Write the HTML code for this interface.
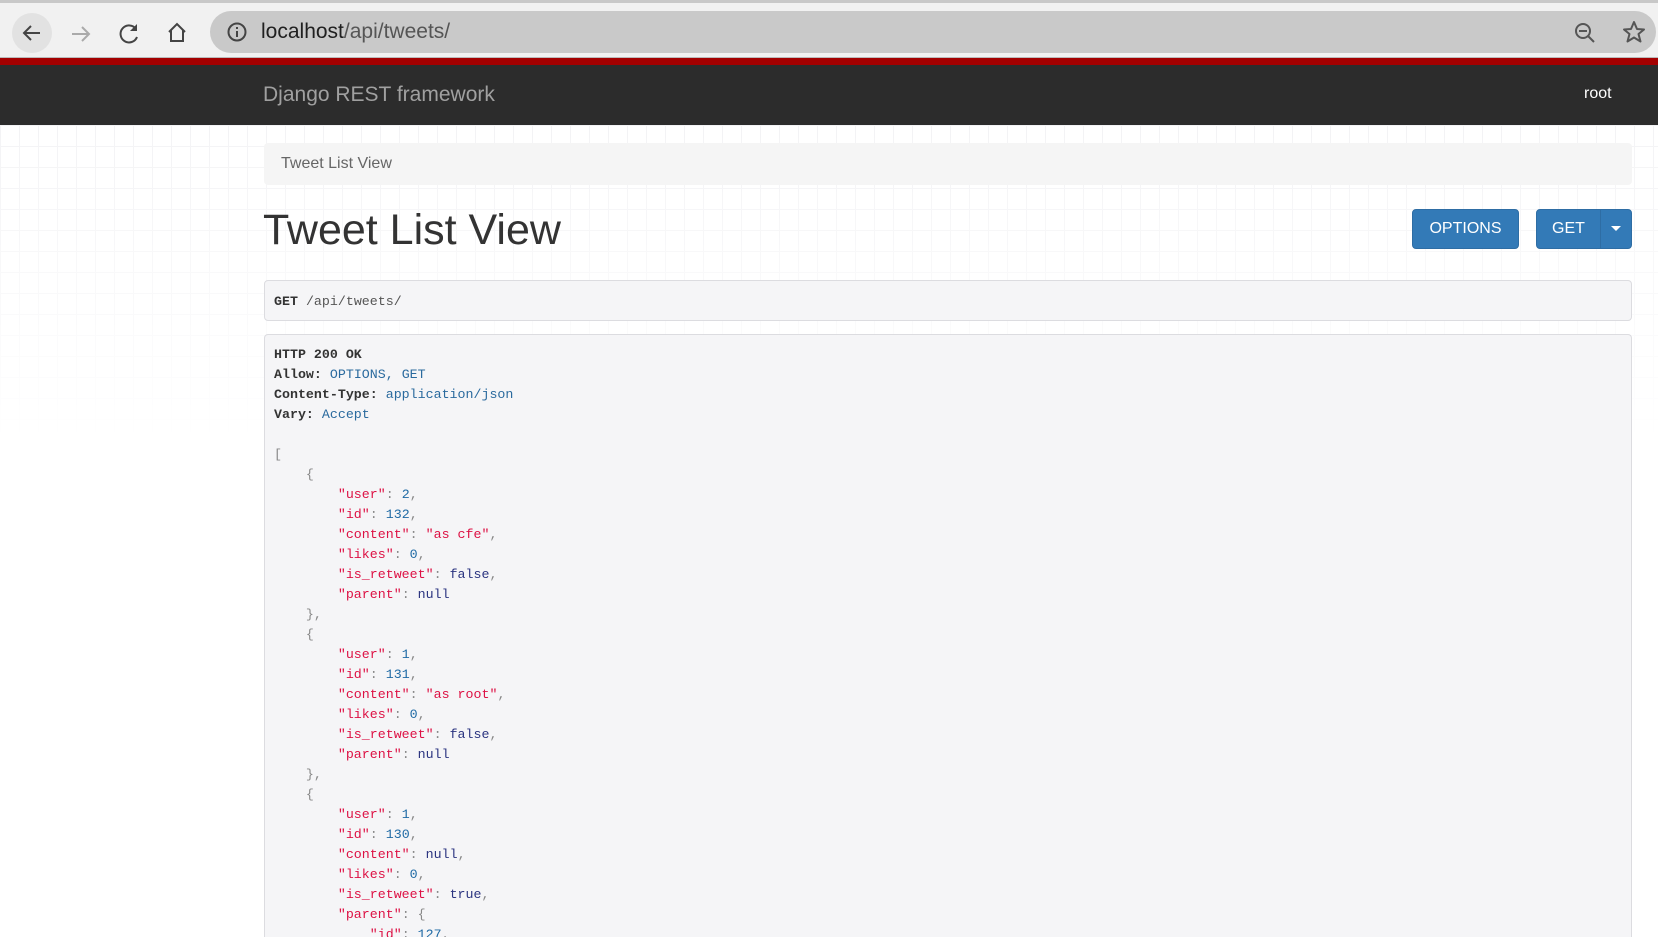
<!DOCTYPE html>
<html style="width:1658px;height:937px;overflow:hidden"><head><meta charset="utf-8"><style>
*{margin:0;padding:0;box-sizing:border-box}
body{width:1658px;height:937px;overflow:hidden;background:#fff;font-family:"Liberation Sans",sans-serif;position:relative}
.chrome{position:absolute;left:0;top:0;width:1658px;height:58px;background:#f1f1f1;border-top:3px solid #c8c8c8;border-bottom:1px solid #bbb}
.url{position:absolute;left:210px;top:8px;width:1446px;height:42px;background:#c9c9c9;border-radius:21px}
.url span{position:absolute;left:51px;top:9px;font-size:21px;color:#202020;font-family:"Liberation Sans",sans-serif}
.url span i{font-style:normal;color:#555}
.red{position:absolute;left:0;top:58px;width:1658px;height:7px;background:#a30000}
.nav{position:absolute;left:0;top:65px;width:1658px;height:60px;background:#2c2c2c}
.brand{position:absolute;left:263px;top:18px;font-size:21px;color:#a0a0a0}
.root{position:absolute;left:1584px;top:20px;font-size:16px;color:#fff}
.grid{position:absolute;left:0;top:125px;width:1658px;height:320px;
background-image:linear-gradient(#f3f3f5 1px,transparent 1px),linear-gradient(90deg,#f3f3f5 1px,transparent 1px);background-size:19px 21px;
-webkit-mask-image:linear-gradient(#000,transparent);}
.bc{position:absolute;left:264px;top:143px;width:1368px;height:42px;background:#f5f5f5;border-radius:4px;font-size:16px;color:#666;padding:12px 17px}
h1{position:absolute;left:263px;top:206px;font-size:43px;font-weight:normal;color:#333}
.btn{position:absolute;top:209px;height:40px;background:#337ab7;border:1px solid #2e6da4;border-radius:4px;color:#fff;font-size:16px;line-height:38px;text-align:center}
.box{position:absolute;left:264px;width:1368px;background:#f5f5f7;border:1px solid #dcdce0;border-radius:4px;font-family:"Liberation Mono",monospace;font-size:13.3px;color:#333}
pre{font-family:"Liberation Mono",monospace;font-size:13.3px;line-height:20px;color:#333;position:absolute;left:9px;top:10px}
.b{color:#333;font-weight:bold}.v{color:#2a6a9e}.k{color:#dd1144}.n{color:#1f6aa5}.l{color:#2b3480}.p{color:#888}
</style></head><body>
<div class="chrome">
<svg style="position:absolute;left:12px;top:10px" width="40" height="40"><circle cx="20" cy="20" r="20" fill="#e2e2e2"/><path d="M28 20H12M19 13l-7 7 7 7" stroke="#444" stroke-width="2" fill="none"/></svg>
<svg style="position:absolute;left:68px;top:18px" width="26" height="26"><path d="M4 13h17M14 6l7 7-7 7" stroke="#aaa" stroke-width="2" fill="none"/></svg>
<svg style="position:absolute;left:116px;top:18px" width="26" height="26"><path d="M20 8A8.5 8.5 0 1 0 21 16" stroke="#444" stroke-width="2" fill="none"/><path d="M21 3v7h-7" fill="#444"/></svg>
<svg style="position:absolute;left:164px;top:17px" width="26" height="26"><path d="M5 12L13 4l8 8M7 10v11h12V10" stroke="#444" stroke-width="2" fill="none"/></svg>
<div class="url"><svg style="position:absolute;left:16px;top:10px" width="22" height="22"><circle cx="11" cy="11" r="8.5" stroke="#444" stroke-width="2" fill="none"/><path d="M11 10v6M11 6v2" stroke="#444" stroke-width="2"/></svg><span>localhost<i>/api/tweets/</i></span>
<svg style="position:absolute;left:1363px;top:10px" width="24" height="24"><circle cx="10" cy="10" r="7" stroke="#555" stroke-width="2" fill="none"/><path d="M6 10h8M15 15l6 6" stroke="#555" stroke-width="2"/></svg>
<svg style="position:absolute;left:1412px;top:9px" width="24" height="24"><path d="M12 2l3 7 7 .5-5.5 4.5 2 7.5L12 17.5 5.5 21.5l2-7.5L2 9.5 9 9z" stroke="#555" stroke-width="2" fill="none" stroke-linejoin="round"/></svg>
</div>
</div>
<div class="red"></div>
<div class="nav"><div class="brand">Django REST framework</div><div class="root">root</div></div>
<div class="grid"></div>
<div class="bc">Tweet List View</div>
<h1>Tweet List View</h1>
<div class="btn" style="left:1412px;width:107px">OPTIONS</div>
<div class="btn" style="left:1536px;width:96px;text-align:left;padding-left:15px">GET<span style="position:absolute;left:63px;top:-1px;width:1px;height:40px;background:#2e6da4"></span><svg style="position:absolute;left:74px;top:16px" width="10" height="6"><path d="M0 0h10L5 5z" fill="#fff"/></svg></div>
<div class="box" style="top:280px;height:41px"><pre style="top:11px"><span class="b">GET</span> <span style="color:#555">/api/tweets/</span></pre></div>
<div class="box" style="top:334px;height:603px;border-bottom:none;border-radius:4px 4px 0 0;overflow:hidden"><pre><span class="b">HTTP 200 OK</span>
<span class="b">Allow:</span> <span class="v">OPTIONS, GET</span>
<span class="b">Content-Type:</span> <span class="v">application/json</span>
<span class="b">Vary:</span> <span class="v">Accept</span>

<span class="p">[</span>
    <span class="p">{</span>
        <span class="k">"user"</span><span class="p">: </span><span class="n">2</span><span class="p">,</span>
        <span class="k">"id"</span><span class="p">: </span><span class="n">132</span><span class="p">,</span>
        <span class="k">"content"</span><span class="p">: </span><span class="k">"as cfe"</span><span class="p">,</span>
        <span class="k">"likes"</span><span class="p">: </span><span class="n">0</span><span class="p">,</span>
        <span class="k">"is_retweet"</span><span class="p">: </span><span class="l">false</span><span class="p">,</span>
        <span class="k">"parent"</span><span class="p">: </span><span class="l">null</span>
    <span class="p">},</span>
    <span class="p">{</span>
        <span class="k">"user"</span><span class="p">: </span><span class="n">1</span><span class="p">,</span>
        <span class="k">"id"</span><span class="p">: </span><span class="n">131</span><span class="p">,</span>
        <span class="k">"content"</span><span class="p">: </span><span class="k">"as root"</span><span class="p">,</span>
        <span class="k">"likes"</span><span class="p">: </span><span class="n">0</span><span class="p">,</span>
        <span class="k">"is_retweet"</span><span class="p">: </span><span class="l">false</span><span class="p">,</span>
        <span class="k">"parent"</span><span class="p">: </span><span class="l">null</span>
    <span class="p">},</span>
    <span class="p">{</span>
        <span class="k">"user"</span><span class="p">: </span><span class="n">1</span><span class="p">,</span>
        <span class="k">"id"</span><span class="p">: </span><span class="n">130</span><span class="p">,</span>
        <span class="k">"content"</span><span class="p">: </span><span class="l">null</span><span class="p">,</span>
        <span class="k">"likes"</span><span class="p">: </span><span class="n">0</span><span class="p">,</span>
        <span class="k">"is_retweet"</span><span class="p">: </span><span class="l">true</span><span class="p">,</span>
        <span class="k">"parent"</span><span class="p">: {</span>
            <span class="k">"id"</span><span class="p">: </span><span class="n">127</span><span class="p">,</span></pre></div>
</body></html>
